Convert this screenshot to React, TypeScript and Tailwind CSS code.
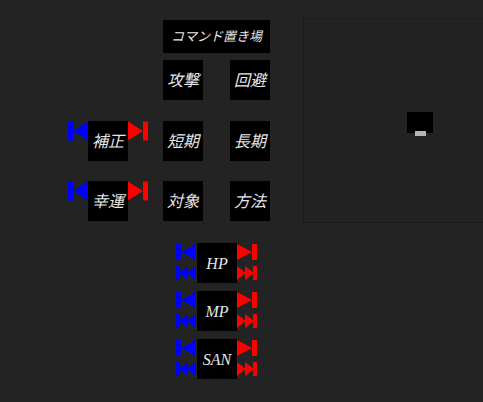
import React from 'react'

const font = { fontFamily: '"Liberation Serif", "Noto Sans CJK JP", serif' }

function SkipLeft() {
  return (
    <svg width="20" height="20" viewBox="0 0 20 20" className="block">
      <rect x="0" y="0.5" width="5" height="19" fill="#0000ff" />
      <polygon points="5,10 20,0.5 20,19.5" fill="#0000ff" />
    </svg>
  )
}

function SkipRight() {
  return (
    <svg width="20" height="20" viewBox="0 0 20 20" className="block">
      <polygon points="0,0.5 15,10 0,19.5" fill="#ff0000" />
      <rect x="15" y="0.5" width="5" height="19" fill="#ff0000" />
    </svg>
  )
}

function StackLeft() {
  return (
    <div className="flex flex-col w-[21px]">
      <svg width="21" height="20" viewBox="0 0 21 20" className="block">
        <rect x="0" y="1" width="5" height="16" fill="#0000ff" />
        <polygon points="5,9 20,1 20,17" fill="#0000ff" />
      </svg>
      <svg width="21" height="20" viewBox="0 0 21 20" className="block">
        <rect x="0" y="3" width="4" height="14" fill="#0000ff" />
        <polygon points="3,10 12,3 12,17" fill="#0000ff" />
        <polygon points="11,10 20,3 20,17" fill="#0000ff" />
      </svg>
    </div>
  )
}

function StackRight() {
  return (
    <div className="flex flex-col w-[21px]">
      <svg width="21" height="20" viewBox="0 0 21 20" className="block">
        <polygon points="0,1 15,9 0,17" fill="#ff0000" />
        <rect x="15" y="1" width="5" height="16" fill="#ff0000" />
      </svg>
      <svg width="21" height="20" viewBox="0 0 21 20" className="block">
        <polygon points="0,3 9,10 0,17" fill="#ff0000" />
        <polygon points="8,3 17,10 8,17" fill="#ff0000" />
        <rect x="16" y="3" width="4" height="14" fill="#ff0000" />
      </svg>
    </div>
  )
}

function Box({ label, className = '' }: { label: string; className?: string }) {
  return (
    <div
      className={`flex items-center justify-center bg-black text-[#e6e6e6] italic text-[16px] leading-none pt-[2px] w-[40px] h-[40px] ${className}`}
      style={font}
    >
      {label}
    </div>
  )
}

function ModRow({ label, a, b }: { label: string; a: string; b: string }) {
  return (
    <div className="flex ml-[68px]">
      <SkipLeft />
      <Box label={label} />
      <SkipRight />
      <Box label={a} className="ml-[15px]" />
      <Box label={b} className="ml-[27px]" />
    </div>
  )
}

function StatRow({ label }: { label: string }) {
  return (
    <div className="flex">
      <StackLeft />
      <Box label={label} />
      <StackRight />
    </div>
  )
}

export default function App() {
  return (
    <div className="w-[483px] h-[402px] bg-[#232323] overflow-hidden">
      <div className="flex pt-[18px]">
        {/* commands */}
        <div className="w-[303px] shrink-0 pt-[2px]">
          <div
            className="ml-[163px] w-[107px] h-[33px] bg-black flex items-center justify-center text-[#e6e6e6] italic text-[13px]"
            style={font}
          >
            コマンド置き場
          </div>
          <div className="flex ml-[163px] mt-[7px]">
            <Box label="攻撃" />
            <Box label="回避" className="ml-[27px]" />
          </div>
          <div className="mt-[21px]">
            <ModRow label="補正" a="短期" b="長期" />
          </div>
          <div className="mt-[20px]">
            <ModRow label="幸運" a="対象" b="方法" />
          </div>
        </div>
        {/* canvas */}
        <div className="relative w-[220px] h-[205px] shrink-0 border border-[#1b1b1b] bg-[#222222]">
          <div className="absolute left-[103px] top-[93px] w-[26px] h-[21px] bg-black" />
          <div className="absolute left-[111px] top-[112px] w-[11px] h-[5px] bg-[#b5b5b5]" />
        </div>
      </div>
      {/* stats */}
      <div className="ml-[176px] mt-[20px] flex flex-col gap-[8px]">
        <StatRow label="HP" />
        <StatRow label="MP" />
        <StatRow label="SAN" />
      </div>
    </div>
  )
}
